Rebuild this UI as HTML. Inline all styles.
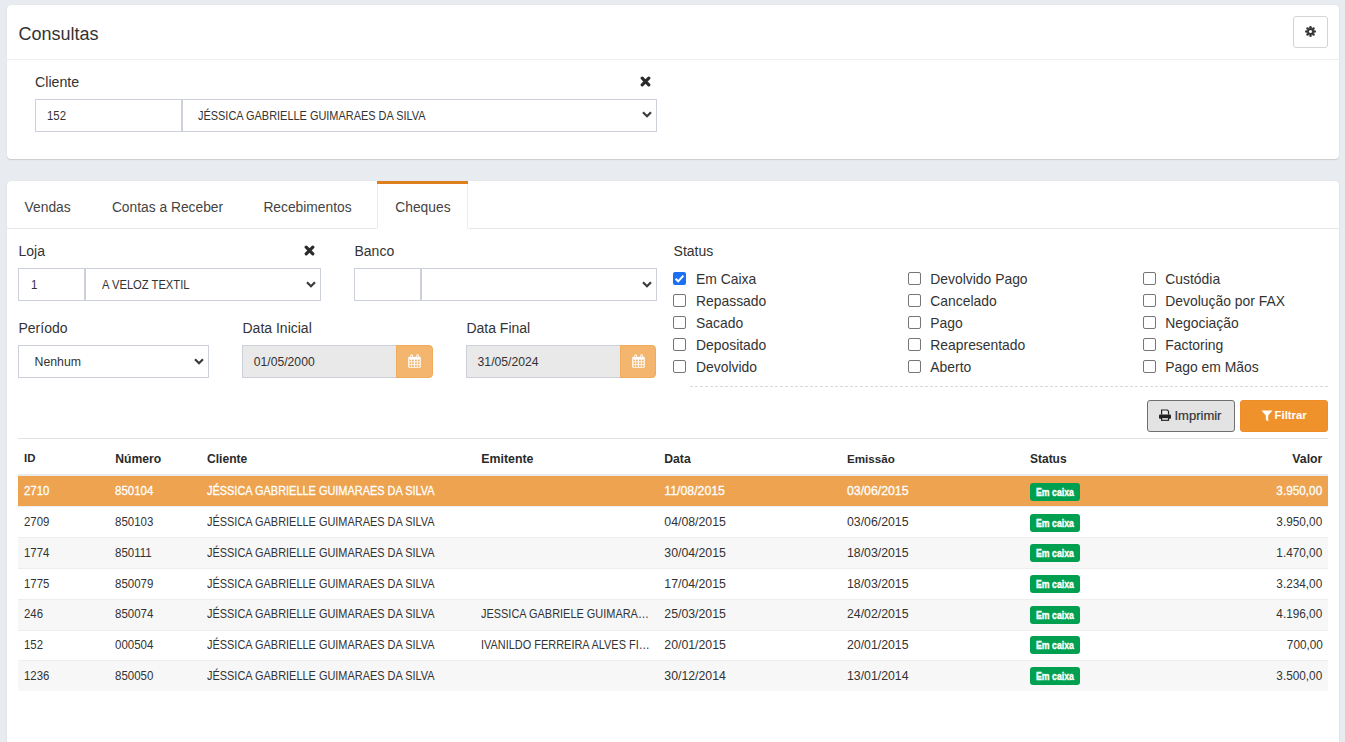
<!DOCTYPE html>
<html><head><meta charset="utf-8">
<style>
*{box-sizing:border-box;margin:0;padding:0}
html,body{width:1345px;height:742px;overflow:hidden}
body{background:#e8ecf0;font-family:"Liberation Sans", sans-serif;color:#343a40;position:relative}
.a{position:absolute}
.t{position:absolute;white-space:nowrap;line-height:1}
.card{position:absolute;background:#fff;border-radius:4px;box-shadow:0 0 1px rgba(0,0,0,.12),0 1px 1px rgba(0,0,0,.12)}
</style></head>
<body>
<div class="card" style="left:7px;top:5px;width:1332px;height:154px"></div>
<div class="a" style="left:7px;top:59px;width:1332px;height:1px;background:#eceef1"></div>
<div class="t" style="left:18.50px;top:24.56px;font-size:18px;color:#333;font-weight:normal;">Consultas</div>
<div class="a" style="left:1293px;top:16px;width:35px;height:32px;border:1px solid #d4d4d4;border-radius:3px;background:#fff"></div>
<svg class="a" style="left:1304.9px;top:25.7px" width="11" height="11" viewBox="0 0 22 22"><g fill="#333"><circle cx="11.00" cy="2.60" r="2.5"/><circle cx="16.94" cy="5.06" r="2.5"/><circle cx="19.40" cy="11.00" r="2.5"/><circle cx="16.94" cy="16.94" r="2.5"/><circle cx="11.00" cy="19.40" r="2.5"/><circle cx="5.06" cy="16.94" r="2.5"/><circle cx="2.60" cy="11.00" r="2.5"/><circle cx="5.06" cy="5.06" r="2.5"/><circle cx="11" cy="11" r="7"/></g><circle cx="11" cy="11" r="3.1" fill="#fff"/></svg>
<div class="t" style="left:35.00px;top:75.18px;font-size:14.2px;color:#333;font-weight:normal;">Cliente</div>
<svg class="a" style="left:639.6px;top:76.2px" width="11" height="11" viewBox="0 0 11 11"><path d="M2.2 2.2L8.8 8.8M8.8 2.2L2.2 8.8" stroke="#2b2b2b" stroke-width="3.2" stroke-linecap="round"/></svg>
<div class="a" style="left:35px;top:99px;width:147px;height:33px;border:1px solid #cbd0da;background:#fff"></div>
<div class="a" style="left:182px;top:99px;width:475px;height:33px;border:1px solid #cbd0da;background:#fff"></div>
<div class="t" style="left:47.00px;top:109.67px;font-size:12.2px;color:#333;font-weight:normal;transform:scaleX(0.9344);transform-origin:0 0;">152</div>
<div class="t" style="left:198.00px;top:109.50px;font-size:12.4px;color:#333;font-weight:normal;transform:scaleX(0.8831);transform-origin:0 0;">JÉSSICA GABRIELLE GUIMARAES DA SILVA</div>
<svg class="a" style="left:641.6px;top:111.3px" width="10" height="7" viewBox="0 0 10 7"><path d="M1 1.2L5 5.2L9 1.2" fill="none" stroke="#3a3a3a" stroke-width="2.2"/></svg>
<div class="card" style="left:7px;top:181px;width:1332px;height:600px"></div>
<div class="a" style="left:7px;top:228px;width:370px;height:1px;background:#e6e8eb"></div>
<div class="a" style="left:468px;top:228px;width:871px;height:1px;background:#e6e8eb"></div>
<div class="a" style="left:377px;top:181px;width:91px;height:3px;background:#dd7f1d"></div>
<div class="a" style="left:377px;top:184px;width:1px;height:44px;background:#ececec"></div>
<div class="a" style="left:467px;top:184px;width:1px;height:44px;background:#ececec"></div>
<div class="t" style="left:24.60px;top:200.52px;font-size:13.8px;color:#444;font-weight:normal;">Vendas</div>
<div class="t" style="left:111.90px;top:200.52px;font-size:13.8px;color:#444;font-weight:normal;">Contas a Receber</div>
<div class="t" style="left:263.40px;top:200.52px;font-size:13.8px;color:#444;font-weight:normal;">Recebimentos</div>
<div class="t" style="left:395.30px;top:200.52px;font-size:13.8px;color:#444;font-weight:normal;">Cheques</div>
<div class="t" style="left:18.50px;top:244.35px;font-size:14px;color:#333;font-weight:normal;">Loja</div>
<svg class="a" style="left:303.7px;top:245.3px" width="11" height="11" viewBox="0 0 11 11"><path d="M2.2 2.2L8.8 8.8M8.8 2.2L2.2 8.8" stroke="#2b2b2b" stroke-width="3.2" stroke-linecap="round"/></svg>
<div class="t" style="left:354.50px;top:244.35px;font-size:14px;color:#333;font-weight:normal;">Banco</div>
<div class="t" style="left:673.60px;top:244.35px;font-size:14px;color:#333;font-weight:normal;">Status</div>
<div class="a" style="left:18px;top:268px;width:67px;height:33px;border:1px solid #cbd0da;background:#fff"></div>
<div class="a" style="left:85px;top:268px;width:236px;height:33px;border:1px solid #cbd0da;background:#fff"></div>
<div class="t" style="left:30.80px;top:278.67px;font-size:12.2px;color:#333;font-weight:normal;transform:scaleX(0.9426);transform-origin:0 0;">1</div>
<div class="t" style="left:101.50px;top:278.67px;font-size:12.2px;color:#333;font-weight:normal;transform:scaleX(0.9180);transform-origin:0 0;">A VELOZ TEXTIL</div>
<svg class="a" style="left:306px;top:280.5px" width="10" height="7" viewBox="0 0 10 7"><path d="M1 1.2L5 5.2L9 1.2" fill="none" stroke="#3a3a3a" stroke-width="2.2"/></svg>
<div class="a" style="left:354px;top:268px;width:67px;height:33px;border:1px solid #cbd0da;background:#fff"></div>
<div class="a" style="left:421px;top:268px;width:236px;height:33px;border:1px solid #cbd0da;background:#fff"></div>
<svg class="a" style="left:642px;top:280.5px" width="10" height="7" viewBox="0 0 10 7"><path d="M1 1.2L5 5.2L9 1.2" fill="none" stroke="#3a3a3a" stroke-width="2.2"/></svg>
<div class="t" style="left:18.50px;top:320.85px;font-size:14px;color:#333;font-weight:normal;">Período</div>
<div class="t" style="left:242.50px;top:320.85px;font-size:14px;color:#333;font-weight:normal;">Data Inicial</div>
<div class="t" style="left:466.40px;top:320.85px;font-size:14px;color:#333;font-weight:normal;">Data Final</div>
<div class="a" style="left:18px;top:345px;width:191px;height:33px;border:1px solid #cbd0da;background:#fff"></div>
<div class="t" style="left:34.50px;top:355.59px;font-size:12.3px;color:#333;font-weight:normal;">Nenhum</div>
<svg class="a" style="left:194px;top:357.5px" width="10" height="7" viewBox="0 0 10 7"><path d="M1 1.2L5 5.2L9 1.2" fill="none" stroke="#3a3a3a" stroke-width="2.2"/></svg>
<div class="a" style="left:242px;top:345px;width:155px;height:33px;border:1px solid #cbd0da;background:#e9e9e9"></div>
<div class="a" style="left:396px;top:345px;width:37px;height:33px;background:#f4b56f;border:1px solid #f0ab5f;border-radius:0 4px 4px 0"></div>
<div class="t" style="left:253.70px;top:355.67px;font-size:12.2px;color:#333;font-weight:normal;">01/05/2000</div>
<svg class="a" style="left:408.1px;top:353.8px" width="13" height="14" viewBox="0 0 13 14"><rect x="0.2" y="2.7" width="12.6" height="11.1" rx="1" fill="#fff"/><g fill="#f4b56f"><rect x="1.4" y="5.6" width="1.9" height="1.9"/><rect x="1.4" y="8.3" width="1.9" height="1.9"/><rect x="1.4" y="11.0" width="1.9" height="1.9"/><rect x="4.0" y="5.6" width="1.9" height="1.9"/><rect x="4.0" y="8.3" width="1.9" height="1.9"/><rect x="4.0" y="11.0" width="1.9" height="1.9"/><rect x="6.9" y="5.6" width="1.9" height="1.9"/><rect x="6.9" y="8.3" width="1.9" height="1.9"/><rect x="6.9" y="11.0" width="1.9" height="1.9"/><rect x="9.7" y="5.6" width="1.9" height="1.9"/><rect x="9.7" y="8.3" width="1.9" height="1.9"/><rect x="9.7" y="11.0" width="1.9" height="1.9"/></g><g fill="#fff"><rect x="2.5" y="0.2" width="2.2" height="3.6" rx="1"/><rect x="8.4" y="0.2" width="2.2" height="3.6" rx="1"/></g><g fill="#f4b56f"><rect x="3.2" y="1.2" width="0.8" height="2" rx=".4"/><rect x="9.1" y="1.2" width="0.8" height="2" rx=".4"/></g></svg>
<div class="a" style="left:466px;top:345px;width:155px;height:33px;border:1px solid #cbd0da;background:#e9e9e9"></div>
<div class="a" style="left:620px;top:345px;width:36px;height:33px;background:#f4b56f;border:1px solid #f0ab5f;border-radius:0 4px 4px 0"></div>
<div class="t" style="left:477.60px;top:355.67px;font-size:12.2px;color:#333;font-weight:normal;">31/05/2024</div>
<svg class="a" style="left:632.1px;top:353.8px" width="13" height="14" viewBox="0 0 13 14"><rect x="0.2" y="2.7" width="12.6" height="11.1" rx="1" fill="#fff"/><g fill="#f4b56f"><rect x="1.4" y="5.6" width="1.9" height="1.9"/><rect x="1.4" y="8.3" width="1.9" height="1.9"/><rect x="1.4" y="11.0" width="1.9" height="1.9"/><rect x="4.0" y="5.6" width="1.9" height="1.9"/><rect x="4.0" y="8.3" width="1.9" height="1.9"/><rect x="4.0" y="11.0" width="1.9" height="1.9"/><rect x="6.9" y="5.6" width="1.9" height="1.9"/><rect x="6.9" y="8.3" width="1.9" height="1.9"/><rect x="6.9" y="11.0" width="1.9" height="1.9"/><rect x="9.7" y="5.6" width="1.9" height="1.9"/><rect x="9.7" y="8.3" width="1.9" height="1.9"/><rect x="9.7" y="11.0" width="1.9" height="1.9"/></g><g fill="#fff"><rect x="2.5" y="0.2" width="2.2" height="3.6" rx="1"/><rect x="8.4" y="0.2" width="2.2" height="3.6" rx="1"/></g><g fill="#f4b56f"><rect x="3.2" y="1.2" width="0.8" height="2" rx=".4"/><rect x="9.1" y="1.2" width="0.8" height="2" rx=".4"/></g></svg>
<div class="a" style="left:673px;top:272px;width:13px;height:13px;background:#1a6ff4;border-radius:2px"></div>
<svg class="a" style="left:673px;top:272px" width="13" height="13" viewBox="0 0 13 13"><path d="M2.6 6.8L5.2 9.3L10.4 3.6" fill="none" stroke="#fff" stroke-width="2"/></svg>
<div class="t" style="left:696.00px;top:272.73px;font-size:13.9px;color:#333;font-weight:normal;">Em Caixa</div>
<div class="a" style="left:673px;top:294px;width:13px;height:13px;border:1px solid #767676;border-radius:2px;background:#fff"></div>
<div class="t" style="left:696.00px;top:294.73px;font-size:13.9px;color:#333;font-weight:normal;">Repassado</div>
<div class="a" style="left:673px;top:316px;width:13px;height:13px;border:1px solid #767676;border-radius:2px;background:#fff"></div>
<div class="t" style="left:696.00px;top:316.73px;font-size:13.9px;color:#333;font-weight:normal;">Sacado</div>
<div class="a" style="left:673px;top:338px;width:13px;height:13px;border:1px solid #767676;border-radius:2px;background:#fff"></div>
<div class="t" style="left:696.00px;top:338.73px;font-size:13.9px;color:#333;font-weight:normal;">Depositado</div>
<div class="a" style="left:673px;top:360px;width:13px;height:13px;border:1px solid #767676;border-radius:2px;background:#fff"></div>
<div class="t" style="left:696.00px;top:360.73px;font-size:13.9px;color:#333;font-weight:normal;">Devolvido</div>
<div class="a" style="left:908px;top:272px;width:13px;height:13px;border:1px solid #767676;border-radius:2px;background:#fff"></div>
<div class="t" style="left:930.30px;top:272.73px;font-size:13.9px;color:#333;font-weight:normal;">Devolvido Pago</div>
<div class="a" style="left:908px;top:294px;width:13px;height:13px;border:1px solid #767676;border-radius:2px;background:#fff"></div>
<div class="t" style="left:930.30px;top:294.73px;font-size:13.9px;color:#333;font-weight:normal;">Cancelado</div>
<div class="a" style="left:908px;top:316px;width:13px;height:13px;border:1px solid #767676;border-radius:2px;background:#fff"></div>
<div class="t" style="left:930.30px;top:316.73px;font-size:13.9px;color:#333;font-weight:normal;">Pago</div>
<div class="a" style="left:908px;top:338px;width:13px;height:13px;border:1px solid #767676;border-radius:2px;background:#fff"></div>
<div class="t" style="left:930.30px;top:338.73px;font-size:13.9px;color:#333;font-weight:normal;">Reapresentado</div>
<div class="a" style="left:908px;top:360px;width:13px;height:13px;border:1px solid #767676;border-radius:2px;background:#fff"></div>
<div class="t" style="left:930.30px;top:360.73px;font-size:13.9px;color:#333;font-weight:normal;">Aberto</div>
<div class="a" style="left:1143px;top:272px;width:13px;height:13px;border:1px solid #767676;border-radius:2px;background:#fff"></div>
<div class="t" style="left:1165.30px;top:272.73px;font-size:13.9px;color:#333;font-weight:normal;">Custódia</div>
<div class="a" style="left:1143px;top:294px;width:13px;height:13px;border:1px solid #767676;border-radius:2px;background:#fff"></div>
<div class="t" style="left:1165.30px;top:294.73px;font-size:13.9px;color:#333;font-weight:normal;">Devolução por FAX</div>
<div class="a" style="left:1143px;top:316px;width:13px;height:13px;border:1px solid #767676;border-radius:2px;background:#fff"></div>
<div class="t" style="left:1165.30px;top:316.73px;font-size:13.9px;color:#333;font-weight:normal;">Negociação</div>
<div class="a" style="left:1143px;top:338px;width:13px;height:13px;border:1px solid #767676;border-radius:2px;background:#fff"></div>
<div class="t" style="left:1165.30px;top:338.73px;font-size:13.9px;color:#333;font-weight:normal;">Factoring</div>
<div class="a" style="left:1143px;top:360px;width:13px;height:13px;border:1px solid #767676;border-radius:2px;background:#fff"></div>
<div class="t" style="left:1165.30px;top:360.73px;font-size:13.9px;color:#333;font-weight:normal;">Pago em Mãos</div>
<div class="a" style="left:690px;top:386px;width:638px;height:0;border-top:1px dashed #d6d9dd"></div>
<div class="a" style="left:1147px;top:400px;width:88px;height:32px;background:#e3e3e3;border:1px solid #6f6f6f;border-radius:3px"></div>
<div class="a" style="left:1240px;top:400px;width:88px;height:32px;background:#f0922b;border:1px solid #ee8d25;border-radius:3px"></div>
<svg class="a" style="left:1159px;top:409px" width="12" height="12" viewBox="0 0 12 12"><path d="M2.6 5.6V1.0H8.3L9.5 2.2V5.6" fill="#eee" stroke="#222" stroke-width="1.2"/><rect x="0" y="5.5" width="12" height="4.3" rx="1" fill="#222"/><rect x="2.6" y="8.6" width="6.9" height="2.7" fill="#f2f2f2" stroke="#222" stroke-width="1.2"/></svg>
<div class="t" style="left:1174.50px;top:408.80px;font-size:13px;color:#333;font-weight:normal;-webkit-text-stroke:0.2px #333;">Imprimir</div>
<svg class="a" style="left:1261px;top:410px" width="12" height="12" viewBox="0 0 12 12"><path fill="#fff" d="M0.5 0.5H11.5L7.2 5.5V11.5L4.8 9.8V5.5Z"/></svg>
<div class="t" style="left:1274.60px;top:410.23px;font-size:11.3px;color:#fff;font-weight:bold;">Filtrar</div>
<div class="a" style="left:18px;top:438px;width:1310px;height:1px;background:#dee2e6"></div>
<div class="t" style="left:24.00px;top:453.35px;font-size:11.4px;color:#2a2a2a;font-weight:bold;">ID</div>
<div class="t" style="left:115.30px;top:452.70px;font-size:12.17px;color:#2a2a2a;font-weight:bold;">Número</div>
<div class="t" style="left:207.00px;top:452.77px;font-size:12.09px;color:#2a2a2a;font-weight:bold;">Cliente</div>
<div class="t" style="left:481.30px;top:452.54px;font-size:12.36px;color:#2a2a2a;font-weight:bold;">Emitente</div>
<div class="t" style="left:664.30px;top:452.69px;font-size:12.18px;color:#2a2a2a;font-weight:bold;">Data</div>
<div class="t" style="left:847.00px;top:453.14px;font-size:11.65px;color:#2a2a2a;font-weight:bold;">Emissão</div>
<div class="t" style="left:1030.00px;top:452.86px;font-size:11.98px;color:#2a2a2a;font-weight:bold;">Status</div>
<div class="t" style="right:22.6px;top:452.59px;font-size:12.3px;color:#2a2a2a;font-weight:bold;left:auto">Valor</div>
<div class="a" style="left:18px;top:474px;width:1310px;height:2px;background:#e9ecef"></div>
<div class="a" style="left:18px;top:476px;width:1310px;height:30px;background:#eda34f"></div>
<div class="t" style="left:24.00px;top:484.70px;font-size:12.4px;color:#fff;font-weight:normal;transform:scaleX(0.9194);transform-origin:0 0;-webkit-text-stroke:0.3px #fff;">2710</div>
<div class="t" style="left:115.30px;top:484.70px;font-size:12.4px;color:#fff;font-weight:normal;transform:scaleX(0.9274);transform-origin:0 0;-webkit-text-stroke:0.3px #fff;">850104</div>
<div class="t" style="left:207.00px;top:484.70px;font-size:12.4px;color:#fff;font-weight:normal;transform:scaleX(0.8831);transform-origin:0 0;-webkit-text-stroke:0.3px #fff;">JÉSSICA GABRIELLE GUIMARAES DA SILVA</div>
<div class="t" style="left:664.30px;top:484.79px;font-size:12.3px;color:#fff;font-weight:normal;-webkit-text-stroke:0.3px #fff;">11/08/2015</div>
<div class="t" style="left:847.00px;top:484.79px;font-size:12.3px;color:#fff;font-weight:normal;-webkit-text-stroke:0.3px #fff;">03/06/2015</div>
<div class="a" style="left:1030px;top:483px;width:50px;height:18px;background:#00a050;border-radius:3px"></div>
<div class="t" style="left:1035.80px;top:487.87px;font-size:10.2px;color:#fff;font-weight:bold;transform:scaleX(0.8578);transform-origin:0 0;-webkit-text-stroke:0.35px #fff;">Em caixa</div>
<div class="t" style="right:22.6px;left:auto;top:484.70px;font-size:12.4px;color:#fff;transform:scaleX(0.9516);transform-origin:100% 0;-webkit-text-stroke:0.3px #fff;">3.950,00</div>
<div class="a" style="left:18px;top:506px;width:1310px;height:31px;background:#fff;border-top:1px solid #eceeef"></div>
<div class="t" style="left:24.00px;top:516.20px;font-size:12.4px;color:#333;font-weight:normal;transform:scaleX(0.9194);transform-origin:0 0;">2709</div>
<div class="t" style="left:115.30px;top:516.20px;font-size:12.4px;color:#333;font-weight:normal;transform:scaleX(0.9274);transform-origin:0 0;">850103</div>
<div class="t" style="left:207.00px;top:516.20px;font-size:12.4px;color:#333;font-weight:normal;transform:scaleX(0.8831);transform-origin:0 0;">JÉSSICA GABRIELLE GUIMARAES DA SILVA</div>
<div class="t" style="left:664.30px;top:516.29px;font-size:12.3px;color:#333;font-weight:normal;">04/08/2015</div>
<div class="t" style="left:847.00px;top:516.29px;font-size:12.3px;color:#333;font-weight:normal;">03/06/2015</div>
<div class="a" style="left:1030px;top:514px;width:50px;height:18px;background:#00a050;border-radius:3px"></div>
<div class="t" style="left:1035.80px;top:518.57px;font-size:10.2px;color:#fff;font-weight:bold;transform:scaleX(0.8578);transform-origin:0 0;-webkit-text-stroke:0.35px #fff;">Em caixa</div>
<div class="t" style="right:22.6px;left:auto;top:516.20px;font-size:12.4px;color:#333;transform:scaleX(0.9516);transform-origin:100% 0;">3.950,00</div>
<div class="a" style="left:18px;top:537px;width:1310px;height:31px;background:#f7f7f7;border-top:1px solid #eceeef"></div>
<div class="t" style="left:24.00px;top:546.90px;font-size:12.4px;color:#333;font-weight:normal;transform:scaleX(0.9194);transform-origin:0 0;">1774</div>
<div class="t" style="left:115.30px;top:546.90px;font-size:12.4px;color:#333;font-weight:normal;transform:scaleX(0.9274);transform-origin:0 0;">850111</div>
<div class="t" style="left:207.00px;top:546.90px;font-size:12.4px;color:#333;font-weight:normal;transform:scaleX(0.8831);transform-origin:0 0;">JÉSSICA GABRIELLE GUIMARAES DA SILVA</div>
<div class="t" style="left:664.30px;top:546.99px;font-size:12.3px;color:#333;font-weight:normal;">30/04/2015</div>
<div class="t" style="left:847.00px;top:546.99px;font-size:12.3px;color:#333;font-weight:normal;">18/03/2015</div>
<div class="a" style="left:1030px;top:544px;width:50px;height:18px;background:#00a050;border-radius:3px"></div>
<div class="t" style="left:1035.80px;top:549.27px;font-size:10.2px;color:#fff;font-weight:bold;transform:scaleX(0.8578);transform-origin:0 0;-webkit-text-stroke:0.35px #fff;">Em caixa</div>
<div class="t" style="right:22.6px;left:auto;top:546.90px;font-size:12.4px;color:#333;transform:scaleX(0.9516);transform-origin:100% 0;">1.470,00</div>
<div class="a" style="left:18px;top:568px;width:1310px;height:31px;background:#fff;border-top:1px solid #eceeef"></div>
<div class="t" style="left:24.00px;top:577.60px;font-size:12.4px;color:#333;font-weight:normal;transform:scaleX(0.9194);transform-origin:0 0;">1775</div>
<div class="t" style="left:115.30px;top:577.60px;font-size:12.4px;color:#333;font-weight:normal;transform:scaleX(0.9274);transform-origin:0 0;">850079</div>
<div class="t" style="left:207.00px;top:577.60px;font-size:12.4px;color:#333;font-weight:normal;transform:scaleX(0.8831);transform-origin:0 0;">JÉSSICA GABRIELLE GUIMARAES DA SILVA</div>
<div class="t" style="left:664.30px;top:577.69px;font-size:12.3px;color:#333;font-weight:normal;">17/04/2015</div>
<div class="t" style="left:847.00px;top:577.69px;font-size:12.3px;color:#333;font-weight:normal;">18/03/2015</div>
<div class="a" style="left:1030px;top:575px;width:50px;height:18px;background:#00a050;border-radius:3px"></div>
<div class="t" style="left:1035.80px;top:579.97px;font-size:10.2px;color:#fff;font-weight:bold;transform:scaleX(0.8578);transform-origin:0 0;-webkit-text-stroke:0.35px #fff;">Em caixa</div>
<div class="t" style="right:22.6px;left:auto;top:577.60px;font-size:12.4px;color:#333;transform:scaleX(0.9516);transform-origin:100% 0;">3.234,00</div>
<div class="a" style="left:18px;top:599px;width:1310px;height:31px;background:#f7f7f7;border-top:1px solid #eceeef"></div>
<div class="t" style="left:24.00px;top:608.30px;font-size:12.4px;color:#333;font-weight:normal;transform:scaleX(0.9194);transform-origin:0 0;">246</div>
<div class="t" style="left:115.30px;top:608.30px;font-size:12.4px;color:#333;font-weight:normal;transform:scaleX(0.9274);transform-origin:0 0;">850074</div>
<div class="t" style="left:207.00px;top:608.30px;font-size:12.4px;color:#333;font-weight:normal;transform:scaleX(0.8831);transform-origin:0 0;">JÉSSICA GABRIELLE GUIMARAES DA SILVA</div>
<div class="t" style="left:481.30px;top:608.30px;font-size:12.4px;color:#333;font-weight:normal;transform:scaleX(0.8831);transform-origin:0 0;">JESSICA GABRIELE GUIMARA…</div>
<div class="t" style="left:664.30px;top:608.39px;font-size:12.3px;color:#333;font-weight:normal;">25/03/2015</div>
<div class="t" style="left:847.00px;top:608.39px;font-size:12.3px;color:#333;font-weight:normal;">24/02/2015</div>
<div class="a" style="left:1030px;top:606px;width:50px;height:18px;background:#00a050;border-radius:3px"></div>
<div class="t" style="left:1035.80px;top:610.67px;font-size:10.2px;color:#fff;font-weight:bold;transform:scaleX(0.8578);transform-origin:0 0;-webkit-text-stroke:0.35px #fff;">Em caixa</div>
<div class="t" style="right:22.6px;left:auto;top:608.30px;font-size:12.4px;color:#333;transform:scaleX(0.9516);transform-origin:100% 0;">4.196,00</div>
<div class="a" style="left:18px;top:630px;width:1310px;height:30px;background:#fff;border-top:1px solid #eceeef"></div>
<div class="t" style="left:24.00px;top:639.00px;font-size:12.4px;color:#333;font-weight:normal;transform:scaleX(0.9194);transform-origin:0 0;">152</div>
<div class="t" style="left:115.30px;top:639.00px;font-size:12.4px;color:#333;font-weight:normal;transform:scaleX(0.9274);transform-origin:0 0;">000504</div>
<div class="t" style="left:207.00px;top:639.00px;font-size:12.4px;color:#333;font-weight:normal;transform:scaleX(0.8831);transform-origin:0 0;">JÉSSICA GABRIELLE GUIMARAES DA SILVA</div>
<div class="t" style="left:481.30px;top:639.00px;font-size:12.4px;color:#333;font-weight:normal;transform:scaleX(0.8831);transform-origin:0 0;">IVANILDO FERREIRA ALVES FI…</div>
<div class="t" style="left:664.30px;top:639.09px;font-size:12.3px;color:#333;font-weight:normal;">20/01/2015</div>
<div class="t" style="left:847.00px;top:639.09px;font-size:12.3px;color:#333;font-weight:normal;">20/01/2015</div>
<div class="a" style="left:1030px;top:636px;width:50px;height:18px;background:#00a050;border-radius:3px"></div>
<div class="t" style="left:1035.80px;top:641.37px;font-size:10.2px;color:#fff;font-weight:bold;transform:scaleX(0.8578);transform-origin:0 0;-webkit-text-stroke:0.35px #fff;">Em caixa</div>
<div class="t" style="right:22.6px;left:auto;top:639.00px;font-size:12.4px;color:#333;transform:scaleX(0.9516);transform-origin:100% 0;">700,00</div>
<div class="a" style="left:18px;top:660px;width:1310px;height:31px;background:#f7f7f7;border-top:1px solid #eceeef"></div>
<div class="t" style="left:24.00px;top:669.70px;font-size:12.4px;color:#333;font-weight:normal;transform:scaleX(0.9194);transform-origin:0 0;">1236</div>
<div class="t" style="left:115.30px;top:669.70px;font-size:12.4px;color:#333;font-weight:normal;transform:scaleX(0.9274);transform-origin:0 0;">850050</div>
<div class="t" style="left:207.00px;top:669.70px;font-size:12.4px;color:#333;font-weight:normal;transform:scaleX(0.8831);transform-origin:0 0;">JÉSSICA GABRIELLE GUIMARAES DA SILVA</div>
<div class="t" style="left:664.30px;top:669.79px;font-size:12.3px;color:#333;font-weight:normal;">30/12/2014</div>
<div class="t" style="left:847.00px;top:669.79px;font-size:12.3px;color:#333;font-weight:normal;">13/01/2014</div>
<div class="a" style="left:1030px;top:667px;width:50px;height:18px;background:#00a050;border-radius:3px"></div>
<div class="t" style="left:1035.80px;top:672.07px;font-size:10.2px;color:#fff;font-weight:bold;transform:scaleX(0.8578);transform-origin:0 0;-webkit-text-stroke:0.35px #fff;">Em caixa</div>
<div class="t" style="right:22.6px;left:auto;top:669.70px;font-size:12.4px;color:#333;transform:scaleX(0.9516);transform-origin:100% 0;">3.500,00</div>
</body></html>
